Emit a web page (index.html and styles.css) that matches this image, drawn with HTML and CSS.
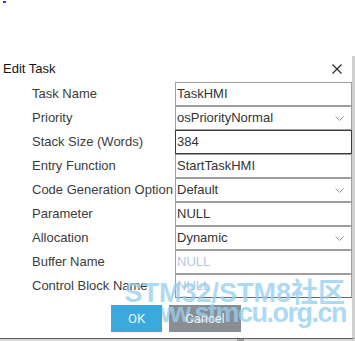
FILE: index.html
```html
<!DOCTYPE html>
<html>
<head>
<meta charset="utf-8">
<link rel="stylesheet" href="styles.css">
</head>
<body>
<div class="top"><span class="dot"></span></div>
<div class="dialog">
  <div class="header">
    <span class="title">Edit Task</span>
    <span class="close"><svg width="10" height="10" viewBox="0 0 10 10"><path d="M0.5 0.5 L9.5 9.5 M9.5 0.5 L0.5 9.5" stroke="#222" stroke-width="1.1" fill="none"/></svg></span>
  </div>
  <div class="form">
    <div class="label">Task Name</div>
    <div class="field">TaskHMI</div>
    <div class="label">Priority</div>
    <div class="field select"><span>osPriorityNormal</span><svg class="chev" width="9" height="5" viewBox="0 0 9 5"><polyline points="0.5,0.5 4.5,4.5 8.5,0.5" stroke="#9a9a9a" stroke-width="1" fill="none"/></svg></div>
    <div class="label">Stack Size (Words)</div>
    <div class="field focus">384</div>
    <div class="label">Entry Function</div>
    <div class="field">StartTaskHMI</div>
    <div class="label">Code Generation Option</div>
    <div class="field select"><span>Default</span><svg class="chev" width="9" height="5" viewBox="0 0 9 5"><polyline points="0.5,0.5 4.5,4.5 8.5,0.5" stroke="#9a9a9a" stroke-width="1" fill="none"/></svg></div>
    <div class="label">Parameter</div>
    <div class="field">NULL</div>
    <div class="label">Allocation</div>
    <div class="field select"><span>Dynamic</span><svg class="chev" width="9" height="5" viewBox="0 0 9 5"><polyline points="0.5,0.5 4.5,4.5 8.5,0.5" stroke="#9a9a9a" stroke-width="1" fill="none"/></svg></div>
    <div class="label">Buffer Name</div>
    <div class="field disabled">NULL</div>
    <div class="label">Control Block Name</div>
    <div class="field disabled last">NULL</div>
  </div>
  <div class="footer">
    <button class="btn ok"><span class="btn-text">OK</span></button>
    <button class="btn cancel"><span class="btn-text">Cancel</span></button>
  </div>
</div>
<div class="shade"><span class="grip"></span></div>
<div class="watermark">
  <div class="wm1">STM32/STM8社区</div>
  <div class="wm2">www.stmcu.org.cn</div>
</div>
</body>
</html>
```
FILE: styles.css
```css
html, body {
  margin: 0;
  padding: 0;
  background: #ffffff;
}
body {
  width: 355px;
  height: 341px;
  overflow: hidden;
  position: relative;
  font-family: "Liberation Sans", Arial, sans-serif;
  font-size: 13px;
}
.top {
  height: 55px;
}
.dot {
  display: block;
  width: 3px;
  height: 2px;
  margin-left: 3px;
  margin-top: 1px;
  background: #2b3cf5;
}
.dialog {
  width: 352px;
  border-right: 3px solid #cfcfcf;
  border-bottom: 1px solid #5e5e5e;
  background: #ffffff;
}
.header {
  height: 26px;
  display: flex;
  align-items: center;
  justify-content: space-between;
  padding: 0 10px 0 3px;
}
.title {
  line-height: 26px;
  color: #151515;
}
.close {
  display: flex;
  width: 10px;
  height: 10px;
}
.form {
  display: grid;
  grid-template-columns: 175px 177px;
  grid-auto-rows: 24px;
}
.label {
  padding-left: 32px;
  line-height: 24px;
  color: #3c3c3c;
  white-space: nowrap;
}
.field {
  box-sizing: border-box;
  height: 24px;
  border: 1px solid #9e9e9e;
  padding-left: 1px;
  line-height: 22px;
  color: #333333;
  white-space: nowrap;
}
.field.focus {
  border-color: #3a3a3a;
}
.field.select {
  display: flex;
  align-items: center;
  justify-content: space-between;
  padding-right: 7px;
}
.field.disabled {
  color: #b9c6e3;
}
.field.last {
  border-bottom-color: #666666;
}
.chev {
  display: block;
}
.footer {
  height: 40px;
  box-sizing: border-box;
  padding-top: 7px;
  display: flex;
  justify-content: center;
  align-items: flex-start;
  gap: 7px;
}
.btn {
  height: 27px;
  border: none;
  padding: 0;
  margin: 0;
  font-family: Roboto, "Liberation Sans", sans-serif;
  font-size: 13px;
  color: #eef5fa;
}
.btn.ok {
  width: 51px;
  background: #3aa9dc;
  position: relative;
  z-index: 3;
}
.btn.cancel {
  width: 72px;
  background: #8a8e92;
  color: #ececec;
}
.btn-text {
  position: relative;
  z-index: 3;
}
.shade {
  height: 4px;
  background: #d8d8d8;
}
.grip {
  display: block;
  margin-left: 237px;
  width: 7px;
  height: 4px;
  background: #9a9a9a;
}
.watermark {
  position: absolute;
  z-index: 2;
  right: 10px;
  top: 283px;
  text-align: right;
  font-family: "Liberation Sans", "Noto Sans CJK SC", sans-serif;
  font-weight: bold;
  font-size: 27px;
  line-height: 20px;
  color: rgba(150, 208, 240, 0.8);
  white-space: nowrap;
  pointer-events: none;
}
.wm2 {
  letter-spacing: -1.5px;
  margin-right: -1px;
}
```
